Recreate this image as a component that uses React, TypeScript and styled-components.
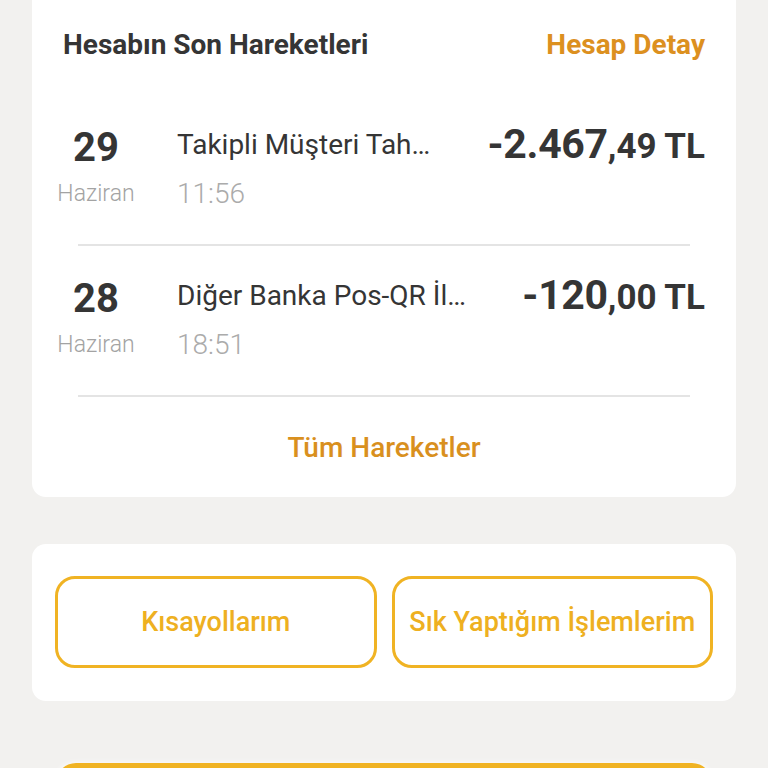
import React from "react";
import styled, { createGlobalStyle } from "styled-components";

const GlobalStyle = createGlobalStyle`
  html, body {
    margin: 0;
    padding: 0;
    background: #f2f1ef;
    font-family: Roboto, "Liberation Sans", Arial, sans-serif;
    -webkit-font-smoothing: antialiased;
  }
  * { box-sizing: border-box; }
`;

const Page = styled.div`
  display: flex;
  flex-direction: column;
  padding: 0 32px;
  height: 768px;
  overflow: hidden;
`;

const Card = styled.section<{ $flatTop?: boolean }>`
  background: #ffffff;
  border-radius: ${(p) => (p.$flatTop ? "0 0 14px 14px" : "14px")};
  flex-shrink: 0;
`;

const ActivityCard = styled(Card)`
  padding: 28px 0 32px;
`;

const Header = styled.div`
  display: flex;
  justify-content: space-between;
  align-items: baseline;
  padding: 0 31px;
  line-height: 34px;
  font-size: 28px;
  font-weight: 700;
`;

const Title = styled.h2`
  margin: 0;
  font-size: inherit;
  font-weight: 700;
  color: #353535;
`;

const HeaderLink = styled.a`
  color: #dc901f;
  text-decoration: none;
`;

const List = styled.div`
  display: flex;
  flex-direction: column;
  margin-top: 33px;
`;

const Row = styled.div`
  display: flex;
  align-items: flex-start;
  padding: 25px 31px 33px 24px;
`;

const DateCol = styled.div`
  width: 80px;
  display: flex;
  flex-direction: column;
  align-items: center;
  flex-shrink: 0;
`;

const DayNum = styled.div`
  margin-top: 6px;
  font-size: 40px;
  line-height: 44px;
  font-weight: 700;
  color: #353535;
`;

const Month = styled.div`
  margin-top: 10px;
  font-size: 23px;
  line-height: 28px;
  font-weight: 300;
  color: #a3a3a3;
`;

const Info = styled.div`
  flex: 1;
  min-width: 0;
  margin-left: 41px;
  padding-top: 8px;
  display: flex;
  flex-direction: column;
`;

const Desc = styled.div`
  font-size: 28px;
  line-height: 34px;
  font-weight: 400;
  color: #353535;
  white-space: nowrap;
`;

const Time = styled.div`
  margin-top: 15px;
  font-size: 28px;
  line-height: 34px;
  font-weight: 300;
  color: #ababab;
`;

const Amount = styled.div`
  font-size: 41px;
  line-height: 48px;
  font-weight: 700;
  color: #353535;
  white-space: nowrap;
  letter-spacing: -0.3px;
`;

const Fraction = styled.span`
  font-size: 35px;
  letter-spacing: 0;
`;

const Divider = styled.div`
  height: 2px;
  margin: 0 46px;
  background: #e4e4e4;
`;

const FooterLink = styled.a`
  display: block;
  margin-top: 34px;
  text-align: center;
  font-size: 28px;
  line-height: 34px;
  font-weight: 500;
  color: #d9901e;
  text-decoration: none;
`;

const ShortcutCard = styled(Card)`
  margin-top: 47px;
  padding: 32px 23px 33px;
  display: grid;
  grid-template-columns: 1fr 1fr;
  gap: 15px;
`;

const OutlineButton = styled.button`
  height: 92px;
  border: 3px solid #f0b323;
  border-radius: 20px;
  background: #ffffff;
  color: #eeb021;
  font-family: inherit;
  font-size: 27px;
  font-weight: 500;
  white-space: nowrap;
  padding: 0;
`;

const PrimaryButton = styled.button`
  margin: 62px 24px 0;
  height: 60px;
  border: 0;
  border-radius: 20px;
  background: #f0b323;
  box-shadow: 0 0 6px rgba(255, 255, 255, 0.9);
  flex-shrink: 0;
`;

type Tx = { day: string; month: string; desc: string; time: string; whole: string; frac: string };

const transactions: Tx[] = [
  { day: "29", month: "Haziran", desc: "Takipli Müşteri Tah…", time: "11:56", whole: "-2.467", frac: ",49 TL" },
  { day: "28", month: "Haziran", desc: "Diğer Banka Pos-QR İl…", time: "18:51", whole: "-120", frac: ",00 TL" },
];

export default function App() {
  return (
    <>
      <GlobalStyle />
      <Page>
        <ActivityCard $flatTop>
          <Header>
            <Title>Hesabın Son Hareketleri</Title>
            <HeaderLink>Hesap Detay</HeaderLink>
          </Header>
          <List>
            {transactions.map((t) => (
              <React.Fragment key={t.day}>
                <Row>
                  <DateCol>
                    <DayNum>{t.day}</DayNum>
                    <Month>{t.month}</Month>
                  </DateCol>
                  <Info>
                    <Desc>{t.desc}</Desc>
                    <Time>{t.time}</Time>
                  </Info>
                  <Amount>
                    {t.whole}
                    <Fraction>{t.frac}</Fraction>
                  </Amount>
                </Row>
                <Divider />
              </React.Fragment>
            ))}
          </List>
          <FooterLink>Tüm Hareketler</FooterLink>
        </ActivityCard>
        <ShortcutCard>
          <OutlineButton>Kısayollarım</OutlineButton>
          <OutlineButton>Sık Yaptığım İşlemlerim</OutlineButton>
        </ShortcutCard>
        <PrimaryButton aria-label="Devam" />
      </Page>
    </>
  );
}
